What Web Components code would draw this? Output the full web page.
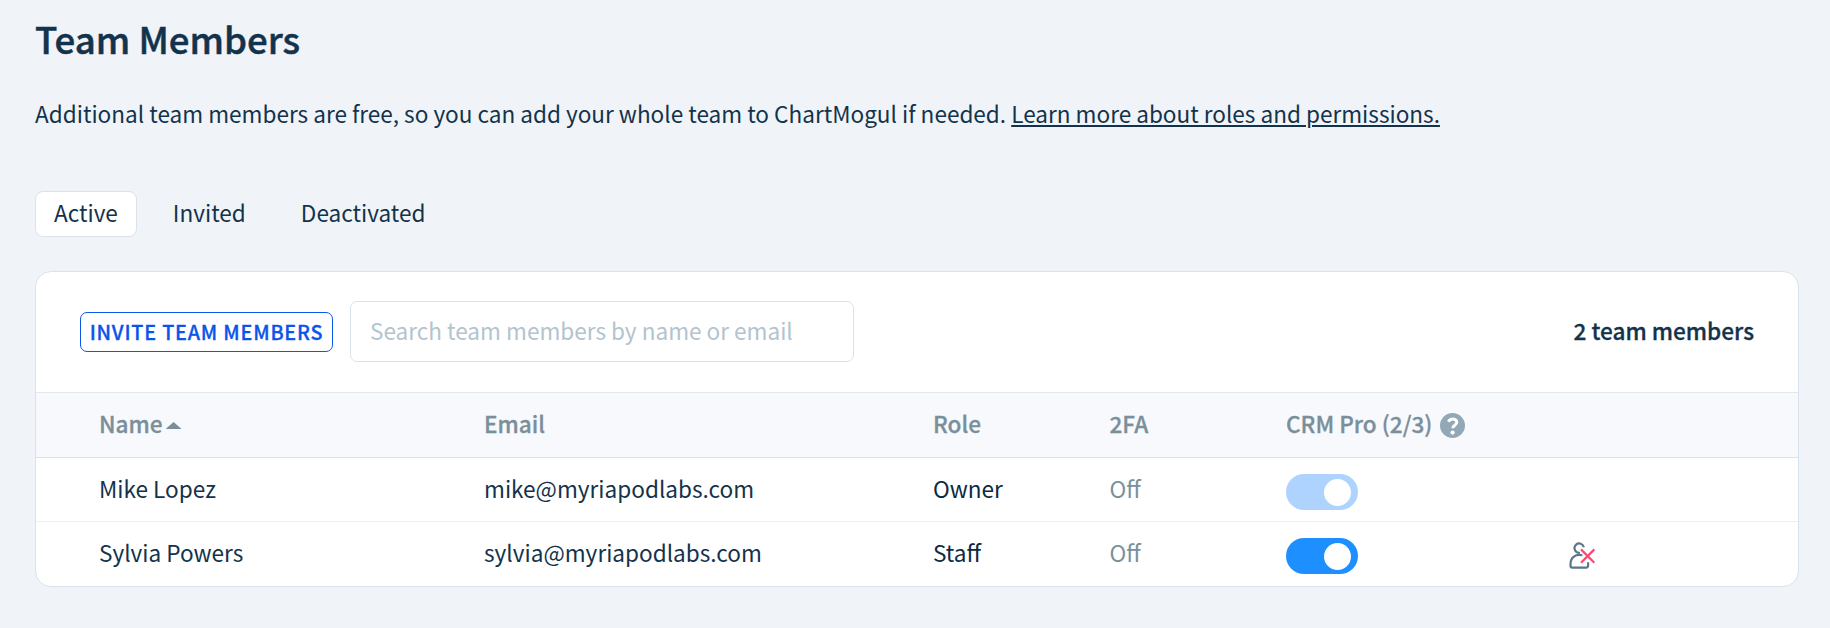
<!DOCTYPE html>
<html lang="en">
<head>
<meta charset="utf-8">
<title>Team Members</title>
<style>
body{
    margin: 0;
    background-color: #f0f4f9;
    color: #13334c;
    font-family: "Noto Sans CJK SC", "Noto Sans", sans-serif;
    font-size: 22.57px;
    line-height: 32px;
}
</style>
</head>
<body>

<team-page>
    <span slot="title">Team Members</span>
    <span slot="intro">Additional team members are free, so you can add your whole team to ChartMogul if needed.</span>
    <span slot="link">Learn more about roles and permissions.</span>

    <tab-bar slot="tabs">
        <tab-item selected>Active</tab-item>
        <tab-item>Invited</tab-item>
        <tab-item>Deactivated</tab-item>
    </tab-bar>

    <members-card>
        <invite-button slot="tools">Invite team members</invite-button>
        <search-box slot="tools">Search team members by name or email</search-box>
        <span slot="count">2 team members</span>

        <members-head></members-head>
        <member-row name="Mike Lopez" email="mike@myriapodlabs.com" role-name="Owner" tfa="Off" locked></member-row>
        <member-row name="Sylvia Powers" email="sylvia@myriapodlabs.com" role-name="Staff" tfa="Off" removable></member-row>
    </members-card>
</team-page>

<script>
function attach(element, html){
    element.attachShadow({mode: 'open'});
    const template = document.createElement('template');
    template.innerHTML = html;
    element.shadowRoot.appendChild(template.content.cloneNode(true));
}

//Columns shared by the table head and its rows
const columns = 'display: grid; grid-template-columns: 385px 449px 176.5px 176.5px 283px auto; align-items: start; padding-left: 63px; box-sizing: border-box;';

class TeamPage extends HTMLElement{
    constructor(){
        super();
        attach(this, `
<style>
:host{
    display: block;
    padding: 19px 31px 0 35px;
}

h1{
    margin: 0;
    font-size: 36.6px;
    font-weight: 500;
    line-height: 40px;
    -webkit-text-stroke: 0.5px currentColor;
}

p{
    margin: 39px 0 61px;
    white-space: nowrap;
}

a{
    color: inherit;
    text-decoration: underline;
    text-decoration-thickness: 2px;
    text-underline-offset: 2px;
}
</style>
<h1><slot name="title"></slot></h1>
<p><slot name="intro"></slot> <a><slot name="link"></slot></a></p>
<slot name="tabs"></slot>
<slot></slot>
`);
    }
}

class TabBar extends HTMLElement{
    constructor(){
        super();
        attach(this, `
<style>
:host{
    display: flex;
    gap: 17px;
    margin-bottom: 34px;
}
</style>
<slot></slot>
`);
    }
}

class TabItem extends HTMLElement{
    constructor(){
        super();
        attach(this, `
<style>
:host{
    display: block;
    box-sizing: border-box;
    height: 46px;
    padding: 5px 18px 0;
    border: 1px solid transparent;
    border-radius: 8px;
}

:host([selected]){
    background-color: #fff;
    border-color: #dae2ec;
}
</style>
<slot></slot>
`);
    }
}

class MembersCard extends HTMLElement{
    constructor(){
        super();
        attach(this, `
<style>
:host{
    display: block;
    background-color: #fff;
    border: 1px solid #dae2ec;
    border-radius: 16px;
    overflow: hidden;
}

.toolbar{
    display: flex;
    align-items: center;
    gap: 17px;
    height: 120px;
    box-sizing: border-box;
    padding: 0 44px;
}

.count{
    margin-left: auto;
    padding-bottom: 2px;
    font-weight: 500;
    -webkit-text-stroke: 0.3px currentColor;
}
</style>
<div class="toolbar">
    <slot name="tools"></slot>
    <div class="count"><slot name="count"></slot></div>
</div>
<slot></slot>
`);
    }
}

class InviteButton extends HTMLElement{
    constructor(){
        super();
        attach(this, `
<style>
:host{
    display: block;
}

button{
    display: block;
    width: 253px;
    height: 40px;
    padding: 0;
    background: none;
    border: 1px solid #0b57e8;
    border-radius: 7px;
    color: #0b54ea;
    font: inherit;
    font-size: 19.8px;
    font-weight: 500;
    letter-spacing: 0.8px;
    line-height: 36px;
    text-transform: uppercase;
    white-space: nowrap;
    -webkit-text-stroke: 0.3px currentColor;
}
</style>
<button><slot></slot></button>
`);
    }
}

class SearchBox extends HTMLElement{
    constructor(){
        super();
        attach(this, `
<style>
:host{
    display: block;
    box-sizing: border-box;
    width: 504px;
    height: 61px;
    margin-bottom: 2px;
    padding: 13px 19px 0;
    border: 1px solid #dae2ec;
    border-radius: 7px;
    color: #b2c4ce;
    white-space: nowrap;
}
</style>
<slot></slot>
`);
    }
}

class HelpIcon extends HTMLElement{
    constructor(){
        super();
        attach(this, `
<style>
:host{
    display: block;
    width: 25px;
    height: 25px;
}

svg{
    display: block;
}
</style>
<svg width="25" height="25" viewBox="0 0 25 25" fill="none">
    <circle cx="12.5" cy="12.5" r="12.5" fill="#92a8b6"/>
    <path d="M8.4 8.7C9.4 6.8 10.8 6 12.7 6c2.3 0 4.1 1.4 4.1 3.3 0 3-4 2.9-4 5.9" stroke="#fff" stroke-width="3.1"/>
    <circle cx="12.6" cy="19.6" r="2.1" fill="#fff"/>
</svg>
`);
    }
}

class ToggleSwitch extends HTMLElement{
    constructor(){
        super();
        attach(this, `
<style>
:host{
    display: flex;
    justify-content: flex-end;
    align-items: center;
    box-sizing: border-box;
    width: 72px;
    height: 36px;
    padding-right: 7px;
    border-radius: 18px;
    background-color: #1e8fff;
}

:host([locked]){
    background-color: #afd3ff;
}

i{
    width: 27px;
    height: 27px;
    border-radius: 50%;
    background-color: #fff;
}
</style>
<i></i>
`);
    }
}

class RemoveIcon extends HTMLElement{
    constructor(){
        super();
        attach(this, `
<style>
:host{
    display: block;
}

svg{
    display: block;
}
</style>
<svg width="28" height="28" viewBox="0 0 28 28" fill="none" stroke-width="2.2">
    <path d="M8.6 10.6A4.7 4.7 0 1 1 14.8 5.3M6.8 9.3C7.6 10.3 8.7 10.9 11 10.9M13.4 13.3C6.5 11.6 1.5 15.5 1.5 22v1.8c0 1.2.6 1.8 1.8 1.8h13.8c1.4 0 2-.7 2-2v-3.4" stroke="#5a7789"/>
    <path d="M12 7.4l13.3 13.3M25.3 7.4L12 20.7" stroke="#fc4770"/>
</svg>
`);
    }
}

class MembersHead extends HTMLElement{
    constructor(){
        super();
        attach(this, `
<style>
:host{
    ${columns}
    height: 66px;
    padding-top: 15px;
    background-color: #f7f9fd;
    border-top: 1px solid #dfe7ef;
    border-bottom: 1px solid #dae2ec;
    color: #7b8f9a;
    font-weight: 500;
    -webkit-text-stroke: 0.3px currentColor;
}

div{
    display: flex;
}

.arrow{
    width: 16px;
    height: 7px;
    margin: 14px 0 0 3px;
    background-color: #7b8f9a;
    clip-path: polygon(0 100%, 50% 0, 100% 100%);
}

help-icon{
    margin: 5px 0 0 8px;
}
</style>
<div>Name<span class="arrow"></span></div>
<div>Email</div>
<div>Role</div>
<div>2FA</div>
<div>CRM Pro (2/3)<help-icon></help-icon></div>
`);
    }
}

class MemberRow extends HTMLElement{
    constructor(){
        super();
        attach(this, `
<style>
:host{
    ${columns}
    height: 64px;
    padding-top: 15px;
    border-bottom: 1px solid #ebf0f5;
}

:host(:last-of-type){
    border-bottom: 0;
}

.role{
    color: #0b2a45;
}

.tfa{
    color: #7b8f9a;
}

toggle-switch{
    margin-top: 1px;
}

remove-icon{
    margin-top: 5px;
}
</style>
<div class="name"></div>
<div class="email"></div>
<div class="role"></div>
<div class="tfa"></div>
<toggle-switch></toggle-switch>
`);
        this.fill('.name', 'name');
        this.fill('.email', 'email');
        this.fill('.role', 'role-name');
        this.fill('.tfa', 'tfa');

        if(this.hasAttribute('locked')){
            this.shadowRoot.querySelector('toggle-switch').setAttribute('locked', '');
        }
        if(this.hasAttribute('removable')){
            this.shadowRoot.appendChild(document.createElement('remove-icon'));
        }
    }

    fill(selector, attribute){
        this.shadowRoot.querySelector(selector).textContent = this.getAttribute(attribute);
    }
}

customElements.define('help-icon', HelpIcon);
customElements.define('toggle-switch', ToggleSwitch);
customElements.define('remove-icon', RemoveIcon);
customElements.define('team-page', TeamPage);
customElements.define('tab-bar', TabBar);
customElements.define('tab-item', TabItem);
customElements.define('members-card', MembersCard);
customElements.define('invite-button', InviteButton);
customElements.define('search-box', SearchBox);
customElements.define('members-head', MembersHead);
customElements.define('member-row', MemberRow);
</script>
</body>
</html>
